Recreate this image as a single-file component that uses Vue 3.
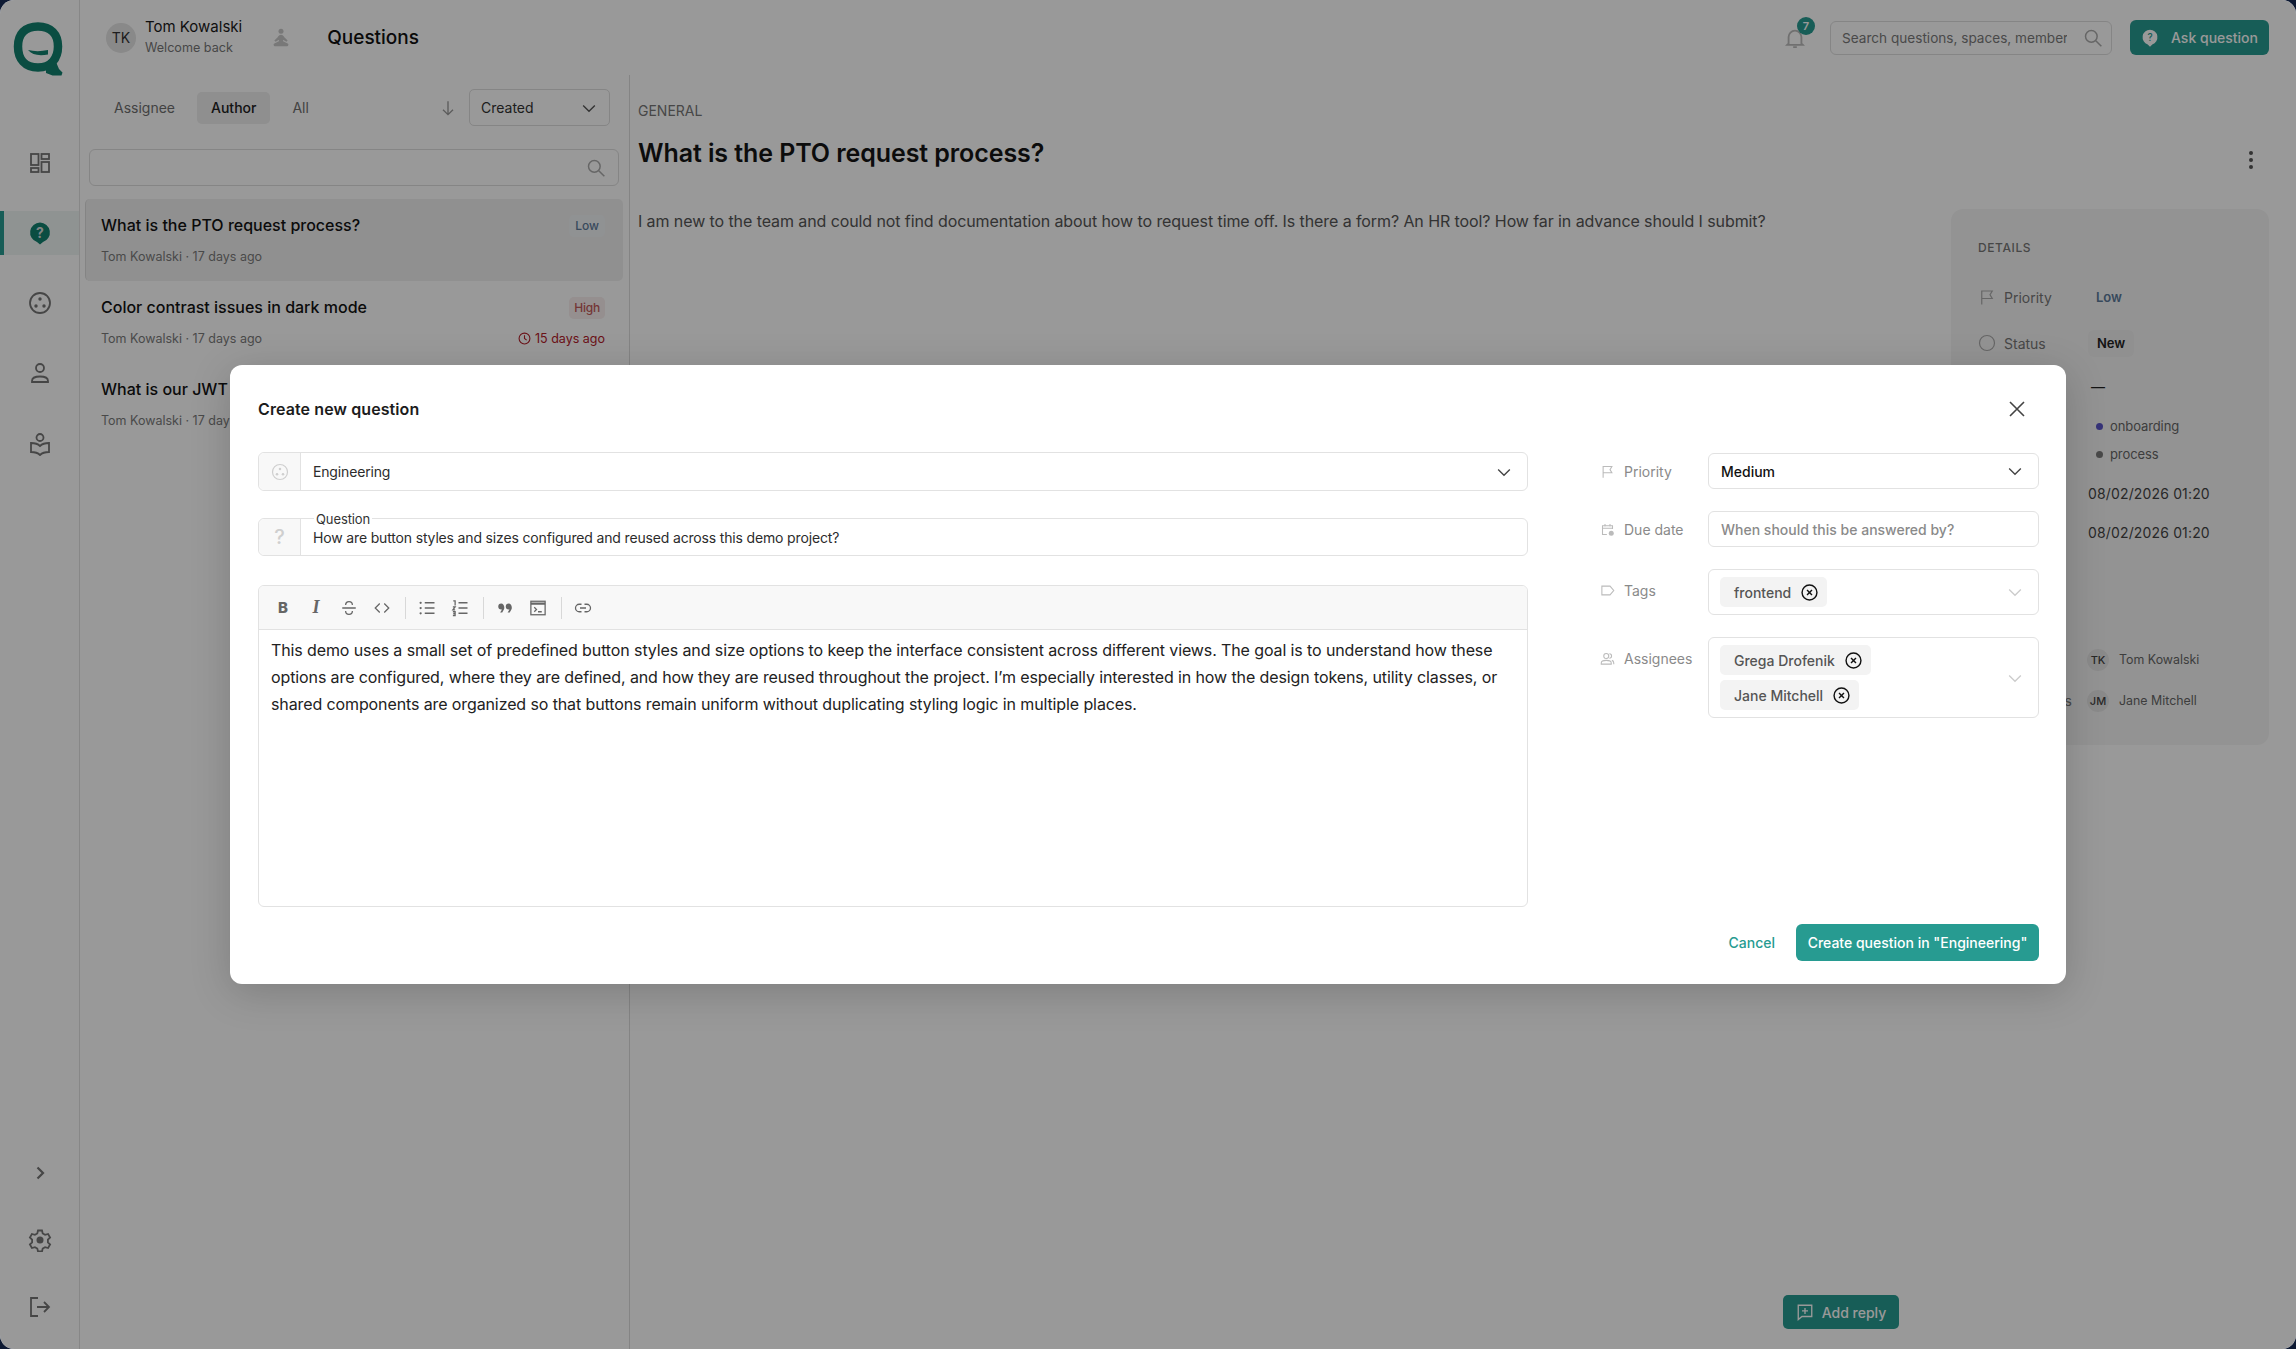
<template>
  <div class="app">
    <aside class="sidebar">
      <svg class="logo" viewBox="0 0 50 54">
        <path d="M25 4.500C12 4.500 5 12 5 24.500s7 21 20 21 20-9 20-21S38 4.500 25 4.500z" fill="none" stroke="#12806f" stroke-width="8.500" />
        <path d="M33 47l10-7 3 7 3.500 3.500-1 3-9 0-6.500-2.500z" class="logo-fill" />
        <path d="M15 28c6 1.500 13 1.500 20 0v4.500c-9 1.500-16 .5-20-4.500z" class="logo-fill" />
      </svg>
      <nav class="nav">
        <a class="nav-item">
          <svg viewBox="0 0 24 24" class="nav-icon"><rect x="3" y="3" width="7.500" height="11" /><rect x="13.500" y="3" width="7.500" height="5" /><rect x="13.500" y="11" width="7.500" height="10" /><rect x="3" y="17" width="7.500" height="4" /></svg>
        </a>
        <a class="nav-item active">
          <svg viewBox="0 0 24 24" class="nav-icon"><path d="M12 1.500a10 10 0 0 0-3 19.500l3 2.500 3-2.500A10 10 0 0 0 12 1.500z" fill="#12806f" stroke="none" /><text x="12" y="16.500" text-anchor="middle" class="q-mark">?</text></svg>
        </a>
        <a class="nav-item">
          <svg viewBox="0 0 24 24" class="nav-icon"><circle cx="12" cy="12" r="10" /><circle cx="12" cy="8" r="1.700" class="solid" /><circle cx="8" cy="15" r="1.700" class="solid" /><circle cx="16" cy="15" r="1.700" class="solid" /></svg>
        </a>
        <a class="nav-item">
          <svg viewBox="0 0 24 24" class="nav-icon"><circle cx="12" cy="7" r="4" /><path d="M4 21v-1c0-3 3-4.500 8-4.500s8 1.500 8 4.500v1z" /></svg>
        </a>
        <a class="nav-item">
          <svg viewBox="0 0 24 24" class="nav-icon"><circle cx="12" cy="5.500" r="3.500" /><path d="M12 14c-2-2-5-3-9-3v9c4 0 7 1 9 3 2-2 5-3 9-3v-9c-4 0-7 1-9 3z" /></svg>
        </a>
      </nav>
      <div class="side-bottom">
        <svg viewBox="0 0 24 24" class="nav-icon thick"><path d="M9.500 6.500l5.500 5.500-5.500 5.500" /></svg>
        <svg viewBox="0 0 24 24" class="nav-icon"><path d="M10 2.500h4l.7 3 2.400 1.400 3-.9 2 3.500-2.200 2.100v2.800l2.200 2.100-2 3.500-3-.9-2.400 1.400-.7 3h-4l-.7-3-2.400-1.400-3 .9-2-3.500 2.200-2.100v-2.800L1.900 9.500l2-3.500 3 .9 2.400-1.400z" /><circle cx="12" cy="12" r="3.500" class="solid" /></svg>
        <svg viewBox="0 0 24 24" class="nav-icon"><path d="M10 3H3v18h7M9 12h12M16 7l5 5-5 5" /></svg>
      </div>
    </aside>

    <div class="main">
      <header class="topbar">
        <div class="avatar">TK</div>
        <div class="user">
          <div class="user-name">Tom Kowalski</div>
          <div class="user-sub">Welcome back</div>
        </div>
        <svg class="zen" viewBox="0 0 24 24"><circle cx="12" cy="4" r="3" /><path d="M12 8c-2 0-3 1-4 3l-4 4 1.500 1.500 4-2.500v2l-6 3c-1 1 0 3 1 3h15c1 0 2-2 1-3l-6-3v-2l4 2.500 1.500-1.500-4-4c-1-2-2-3-4-3z" /></svg>
        <h1 class="page-title">Questions</h1>
        <div class="top-right">
          <div class="bell">
            <svg viewBox="0 0 24 24" class="bell-icon"><path d="M5 18V11a7 7 0 0 1 14 0v7l1.500 1.500h-17zM10 22h4" /></svg>
            <span class="bell-count">7</span>
          </div>
          <div class="top-search">
            <input class="top-input" placeholder="Search questions, spaces, members..." />
            <svg viewBox="0 0 24 24" class="search-icon wide"><circle cx="10" cy="10" r="7" /><path d="M15 15l7 7" /></svg>
          </div>
          <button class="ask-btn">
            <svg viewBox="0 0 24 24" class="ask-icon"><path d="M12 1a10 10 0 0 0-3 19.500l3 3 3-3A10 10 0 0 0 12 1z" fill="#fff" /><text x="12" y="16" text-anchor="middle" class="ask-mark">?</text></svg>
            Ask question
          </button>
        </div>
      </header>

      <div class="content">
        <section class="list-panel">
          <div class="filters">
            <span v-for="f in filters" :key="f" class="filter" :class="{ on: f === 'Author' }">{{ f }}</span>
            <svg viewBox="0 0 24 24" class="sort-arrow"><path d="M12 4v16M6 14l6 6 6-6" /></svg>
            <div class="sort-select">
              Created
              <svg viewBox="0 0 24 24" class="chev"><path d="M5 9l7 7 7-7" /></svg>
            </div>
          </div>
          <div class="list-search">
            <svg viewBox="0 0 24 24" class="search-icon"><circle cx="10" cy="10" r="7" /><path d="M15 15l7 7" /></svg>
          </div>
          <div class="q-list">
            <div v-for="q in questions" :key="q.title" class="q-item" :class="{ selected: q.selected }">
              <div class="q-line">
                <span class="q-title">{{ q.title }}</span>
                <span v-if="q.priority" class="badge" :class="q.priority.toLowerCase()">{{ q.priority }}</span>
              </div>
              <div class="q-line meta">
                <span>Tom Kowalski · 17 days ago</span>
                <span v-if="q.overdue" class="overdue">
                  <svg viewBox="0 0 24 24"><circle cx="12" cy="12" r="10" /><path d="M12 6v6l4 3" /></svg>
                  {{ q.overdue }}
                </span>
              </div>
            </div>
          </div>
        </section>

        <section class="detail">
          <div class="space-label">GENERAL</div>
          <div class="detail-head">
            <h2 class="detail-title">What is the PTO request process?</h2>
            <span class="dots"><i></i><i></i><i></i></span>
          </div>
          <div class="detail-body">
            <p class="detail-text">I am new to the team and could not find documentation about how to request time off. Is there a form? An HR tool? How far in advance should I submit?</p>
            <aside class="details">
              <div class="details-title">DETAILS</div>
              <div class="d-row first">
                <svg viewBox="0 0 24 24" class="d-icon"><path d="M5 22V4h14l-3 5 3 5H5" /></svg>
                <span class="d-label">Priority</span>
                <span class="d-val low">Low</span>
              </div>
              <div class="d-row">
                <svg viewBox="0 0 24 24" class="d-icon"><circle cx="12" cy="12" r="10" /></svg>
                <span class="d-label">Status</span>
                <span class="d-val chip">New</span>
              </div>
              <div class="d-row dash-row">
                <span class="d-val">—</span>
              </div>
              <div class="d-tag first-tag"><i class="tag-dot blue"></i>onboarding</div>
              <div class="d-tag"><i class="tag-dot"></i>process</div>
              <div class="d-date first-date">08/02/2026 01:20</div>
              <div class="d-date">08/02/2026 01:20</div>
              <div class="d-person first-person"><span class="mini">TK</span>Tom Kowalski</div>
              <div class="d-person"><span class="hidden-label">Assignees</span><span class="mini">JM</span>Jane Mitchell</div>
            </aside>
          </div>
          <button class="reply-btn">
            <svg viewBox="0 0 24 24"><path d="M3 3h18v15H8l-5 4zM8 10.500h8M12 6.500v8" /></svg>
            Add reply
          </button>
        </section>
      </div>
    </div>

    <div class="overlay"></div>
    <div class="modal-wrap">
      <div class="modal">
        <div class="modal-head">
          <h3 class="modal-title">Create new question</h3>
          <svg viewBox="0 0 24 24" class="close"><path d="M5 5l14 14M19 5L5 19" /></svg>
        </div>
        <div class="modal-body">
          <div class="left-col">
            <div class="field space-field">
              <span class="addon">
                <svg viewBox="0 0 24 24"><circle cx="12" cy="12" r="10" /><circle cx="12" cy="8" r="1.700" class="solid" /><circle cx="8" cy="15" r="1.700" class="solid" /><circle cx="16" cy="15" r="1.700" class="solid" /></svg>
              </span>
              <span class="field-text">Engineering</span>
              <svg viewBox="0 0 24 24" class="chev dark"><path d="M5 9l7 7 7-7" /></svg>
            </div>
            <div class="field question-field">
              <span class="addon q-addon">?</span>
              <span class="float-label">Question</span>
              <span class="field-text">How are button styles and sizes configured and reused across this demo project?</span>
            </div>
            <div class="editor">
              <div class="toolbar">
                <span class="tool bold">B</span>
                <span class="tool ital">I</span>
                <svg viewBox="0 0 24 24" class="tool-svg"><path d="M3 12h18M7.500 8c0-3 2-4.500 4.500-4.500S16.500 5 16.500 8M7.500 16c0 3 2 4.500 4.500 4.500s4.500-1.500 4.500-4.500" /></svg>
                <svg viewBox="0 0 24 24" class="tool-svg"><path d="M9 6l-6 6 6 6M15 6l6 6-6 6" /></svg>
                <i class="sep"></i>
                <svg viewBox="0 0 24 24" class="tool-svg"><path d="M9 5h13M9 12h13M9 19h13" /><circle cx="3.500" cy="5" r="1.500" class="solid" /><circle cx="3.500" cy="12" r="1.500" class="solid" /><circle cx="3.500" cy="19" r="1.500" class="solid" /></svg>
                <svg viewBox="0 0 24 24" class="tool-svg"><path d="M10 5h12M10 12h12M10 19h12M3 2.500h2.500v6M2.500 10.500h3l-3 4h3M2.500 17h3v5h-3M3 19.500h2.500" /></svg>
                <i class="sep"></i>
                <svg viewBox="0 0 24 24" class="tool-svg fill"><path d="M7 6a4 4 0 0 0 0 8c.4 0 .7 0 1-.1L5.500 18h2.800l2.200-4c.4-.8.600-1.500.600-2.500 0-3-1.800-5.500-4.100-5.500zM17 6a4 4 0 0 0 0 8c.4 0 .7 0 1-.1L15.500 18h2.800l2.200-4c.4-.8.600-1.500.600-2.500 0-3-1.800-5.500-4.100-5.500z" /></svg>
                <svg viewBox="0 0 24 24" class="tool-svg"><rect x="2.500" y="3" width="19" height="18" /><path d="M2.500 6h19" stroke-width="3" /><path d="M7 11l3 3-3 3M12 17h5" /></svg>
                <i class="sep"></i>
                <svg viewBox="0 0 24 24" class="tool-svg"><path d="M10 7H7a5 5 0 0 0 0 10h3M14 7h3a5 5 0 0 1 0 10h-3M8 12h8" /></svg>
              </div>
              <div class="editor-text">This demo uses a small set of predefined button styles and size options to keep the interface consistent across different views. The goal is to understand how these options are configured, where they are defined, and how they are reused throughout the project. I’m especially interested in how the design tokens, utility classes, or shared components are organized so that buttons remain uniform without duplicating styling logic in multiple places.</div>
            </div>
          </div>

          <div class="right-col">
            <div class="prop">
              <div class="prop-label">
                <svg viewBox="0 0 24 24"><path d="M5 22V4h14l-3 5 3 5H5" /></svg>
                Priority
              </div>
              <div class="prop-box h36 strong">
                Medium
                <svg viewBox="0 0 24 24" class="chev dark"><path d="M5 9l7 7 7-7" /></svg>
              </div>
            </div>
            <div class="prop">
              <div class="prop-label">
                <svg viewBox="0 0 24 24"><path d="M11 20H4V6h16v5M4 10h16M8 3v4M16 3v4" /><circle cx="18" cy="18" r="4" class="solid" /></svg>
                Due date
              </div>
              <div class="prop-box h36 placeholder">When should this be answered by?</div>
            </div>
            <div class="prop">
              <div class="prop-label tall">
                <svg viewBox="0 0 24 24"><path d="M3 5h13l6 7-6 7H3z" /></svg>
                Tags
              </div>
              <div class="prop-box chips">
                <div class="chip-wrap">
                  <span class="pill">frontend
                    <svg viewBox="0 0 24 24"><circle cx="12" cy="12" r="10.500" /><path d="M8.500 8.500l7 7M15.500 8.500l-7 7" /></svg>
                  </span>
                </div>
                <svg viewBox="0 0 24 24" class="chev faint"><path d="M5 9l7 7 7-7" /></svg>
              </div>
            </div>
            <div class="prop">
              <div class="prop-label tall">
                <svg viewBox="0 0 24 24"><circle cx="10" cy="8" r="4" /><path d="M2 21v-2c0-3 3-4 8-4s8 1 8 4v2zM15 4.500a3.500 3.500 0 0 1 0 7M19 15c2 .5 3 2 3 4v2" /></svg>
                Assignees
              </div>
              <div class="prop-box chips">
                <div class="chip-wrap">
                  <span class="pill">Grega Drofenik
                    <svg viewBox="0 0 24 24"><circle cx="12" cy="12" r="10.500" /><path d="M8.500 8.500l7 7M15.500 8.500l-7 7" /></svg>
                  </span>
                  <span class="pill">Jane Mitchell
                    <svg viewBox="0 0 24 24"><circle cx="12" cy="12" r="10.500" /><path d="M8.500 8.500l7 7M15.500 8.500l-7 7" /></svg>
                  </span>
                </div>
                <svg viewBox="0 0 24 24" class="chev faint"><path d="M5 9l7 7 7-7" /></svg>
              </div>
            </div>
          </div>
        </div>
        <div class="modal-foot">
          <button class="cancel">Cancel</button>
          <button class="create">Create question in "Engineering"</button>
        </div>
      </div>
    </div>
  </div>
</template>

<script setup>
const filters = ['Assignee', 'Author', 'All']

const questions = [
  { title: 'What is the PTO request process?', priority: 'Low', selected: true },
  { title: 'Color contrast issues in dark mode', priority: 'High', overdue: '15 days ago' },
  { title: 'What is our JWT token expiry policy?' }
]
</script>

<style>
html, body { margin: 0; background: #0e1a33; }
</style>

<style scoped>
.app {
  position: relative;
  display: flex;
  width: 2296px;
  height: 1349px;
  overflow: hidden;
  background: #fff;
  border-radius: 14px;
  font-family: Inter, "Liberation Sans", sans-serif;
  color: #111;
}
svg { fill: none; stroke: currentColor; stroke-width: 2; flex: none; }
.solid { fill: currentColor; stroke: none; }

.sidebar {
  width: 79px;
  flex: none;
  border-right: 1px solid #e2e2e2;
  display: flex;
  flex-direction: column;
  align-items: center;
  color: #6e6e6e;
}
.logo { width: 50px; height: 54px; margin: 22px 0 0 -4px; }
.logo-fill { fill: #12806f; stroke: none; }
.nav { width: 100%; margin-top: 52px; display: flex; flex-direction: column; }
.nav-item { height: 70.500px; display: flex; align-items: center; justify-content: center; border-left: 3px solid transparent; padding-right: 3px; color: #757575; }
.nav-item.active { height: 44px; margin: 12px 0 13px; background: #eef5f4; border-left: 4px solid #279b91; padding-right: 4px; }
.nav-icon { width: 24px; height: 24px; stroke-width: 1.800; }
.nav-icon.thick { stroke-width: 2.200; }
.q-mark { font-size: 14px; font-weight: 700; fill: #d8dede; stroke: none; font-family: Inter, sans-serif; }
.side-bottom { margin-top: auto; height: 158px; margin-bottom: 30px; display: flex; flex-direction: column; align-items: center; justify-content: space-between; color: #757575; }

.main { flex: 1; min-width: 0; display: flex; flex-direction: column; }
.topbar { height: 75px; flex: none; display: flex; align-items: center; padding: 0 27px 0 26px; }
.avatar { width: 30px; height: 30px; border-radius: 50%; background: #e4e4e4; color: #333; font-size: 14px; display: flex; align-items: center; justify-content: center; }
.user { margin-left: 9px; }
.user-name { font-size: 15px; line-height: 20px; color: #1a1a1a; }
.user-sub { font-size: 12.600px; line-height: 21px; color: #777; }
.zen { width: 20px; height: 20px; margin-left: 29px; fill: #c8c8c8; stroke: none; }
.page-title { margin: 0 0 0 36px; font-size: 19px; font-weight: 500; color: #111; }
.top-right { margin-left: auto; display: flex; align-items: center; }
.bell { position: relative; width: 22px; height: 24px; margin-right: 24px; color: #bbb; }
.bell-icon { width: 22px; height: 24px; }
.bell-count { position: absolute; top: -9px; left: 13px; width: 18px; height: 18px; border-radius: 50%; background: #279b91; color: #fff; font-size: 11px; font-weight: 600; display: flex; align-items: center; justify-content: center; }
.top-search { width: 282px; height: 34px; box-sizing: border-box; border: 1px solid #dedede; border-radius: 6px; display: flex; align-items: center; padding: 0 8px 0 11px; color: #aaa; }
.top-input { flex: 1; min-width: 0; border: 0; outline: 0; background: none; padding: 0; font: 13.600px Inter, sans-serif; }
.top-input::placeholder { color: #7b7b7b; opacity: 1; }
.search-icon { width: 20px; height: 20px; margin-left: 8px; stroke-width: 1.800; }
.search-icon.wide { margin-left: 16px; }
.ask-btn { margin-left: 18px; width: 139px; height: 35px; border: 0; border-radius: 6px; background: #279b91; color: #fff; font: 500 14px Inter, sans-serif; display: flex; align-items: center; justify-content: center; gap: 12px; padding: 0; }
.ask-icon { width: 18px; height: 18px; stroke: none; }
.ask-mark { font-size: 13px; font-weight: 500; fill: #279b91; font-family: Inter, sans-serif; }

.content { flex: 1; min-height: 0; display: flex; }
.list-panel { width: 549px; flex: none; border-right: 1px solid #dcdcdc; padding: 14px 0 0; }
.filters { display: flex; align-items: center; gap: 8px; height: 37px; padding: 0 19px 0 20px; }
.filter { height: 32px; padding: 0 14px; border-radius: 5px; font-size: 14px; line-height: 32px; color: #6f6f6f; }
.filter.on { background: #eee; color: #222; font-weight: 500; }
.sort-arrow { width: 20px; height: 20px; margin-left: auto; margin-right: 3px; color: #999; stroke-width: 1.600; }
.sort-select { width: 141px; height: 37px; box-sizing: border-box; border: 1px solid #dedede; border-radius: 5px; padding: 0 10px 0 11px; font-size: 14px; color: #333; display: flex; align-items: center; justify-content: space-between; }
.chev { width: 20px; height: 20px; color: #555; stroke-width: 1.600; }
.chev.dark { color: #444; }
.chev.faint { color: #ccc; }
.list-search { margin: 23px 10px 0 9px; height: 37px; box-sizing: border-box; border: 1px solid #dedede; border-radius: 6px; display: flex; align-items: center; justify-content: flex-end; padding-right: 12px; color: #aaa; }
.q-list { margin: 13px 6px 0 5px; }
.q-item { height: 82px; box-sizing: border-box; padding: 13.500px 18px 0 16px; }
.q-item.selected { background: #f1f1f1; border-radius: 5px; border-left: 1px solid #ddd; padding-left: 15px; }
.q-line { display: flex; align-items: center; justify-content: space-between; height: 24px; }
.q-line.meta { margin-top: 8px; font-size: 12.500px; color: #7b7b7b; }
.q-title { font-size: 16px; font-weight: 500; color: #131313; }
.badge { height: 22px; margin-top: 3px; padding: 0 6px; border-radius: 5px; font-size: 12px; line-height: 22px; font-weight: 500; }
.badge.low { background: #f0f3f6; color: #5d7a9a; }
.badge.high { padding: 0 5px; background: #f8eeee; color: #c25a5a; letter-spacing: -.2px; }
.overdue { color: #b3202a; display: flex; align-items: center; gap: 4px; }
.overdue svg { width: 13px; height: 13px; }

.detail { flex: 1; position: relative; min-width: 0; padding: 27px 27px 0 8px; }
.space-label { font-size: 14px; line-height: 17px; color: #777; }
.detail-head { display: flex; align-items: center; justify-content: space-between; margin-top: 17px; }
.detail-title { margin: 0; font-size: 25px; line-height: 34px; font-weight: 600; letter-spacing: -.08px; color: #151515; }
.dots { display: flex; flex-direction: column; gap: 3px; margin: 13px 16px 0 0; }
.dots i { width: 4px; height: 4px; border-radius: 50%; background: #555; }
.detail-body { display: flex; justify-content: space-between; margin-top: 39px; }
.detail-text { margin: 0; font-size: 16px; line-height: 24px; letter-spacing: -.09px; color: #555; white-space: nowrap; width: 0; }
.details { width: 318px; height: 536px; box-sizing: border-box; background: #f6f6f6; border-radius: 12px; padding: 31px 0 0 27px; font-size: 14px; color: #777; }
.details-title { font-size: 12px; line-height: 16px; font-weight: 500; letter-spacing: .6px; color: #777; }
.d-row { display: flex; align-items: center; height: 30px; margin-top: 16px; }
.d-row.first { margin-top: 26px; }
.d-row.dash-row { margin-top: 13px; padding-left: 110px; }
.d-icon { width: 18px; height: 18px; margin-right: 8px; color: #aaa; stroke-width: 1.600; }
.d-label { width: 84px; }
.d-val { color: #222; font-size: 14px; font-weight: 600; padding: 0 9px; height: 27px; line-height: 27px; border-radius: 6px; }
.dash-row .d-val { padding: 0 3px; font-weight: 400; }
.d-val.low { color: #5d7a9a; font-size: 13px; margin-left: -1px; }
.d-val.chip { background: #f0f0f0; font-size: 13px; }
.d-tag { margin-left: 118px; height: 28px; display: flex; align-items: center; font-size: 13px; letter-spacing: -.1px; color: #666; }
.first-tag { margin-top: 11px; }
.tag-dot { width: 7px; height: 7px; border-radius: 50%; background: #7a7a7a; margin-right: 7px; }
.tag-dot.blue { background: #5a55c8; }
.d-date { margin-left: 110px; height: 39px; line-height: 39px; font-size: 14px; letter-spacing: .15px; color: #444; }
.first-date { margin-top: 6px; }
.d-person { position: relative; margin-left: 113px; height: 41px; display: flex; align-items: center; gap: 10px; font-size: 12.400px; color: #666; }
.first-person { margin-top: 87px; }
.hidden-label { position: absolute; right: calc(100% + 19px); top: 12px; font-size: 14px; color: #777; }
.mini { width: 22px; height: 22px; border-radius: 50%; background: #e6e6e6; color: #444; font-size: 11px; font-weight: 500; display: flex; align-items: center; justify-content: center; margin-left: -4px; }
.reply-btn { position: absolute; left: 1153px; bottom: 20px; width: 116px; height: 34px; border: 0; border-radius: 5px; background: #279b91; color: #fff; font: 500 14px Inter, sans-serif; display: flex; align-items: center; justify-content: center; gap: 8px; padding: 0; }
.reply-btn svg { width: 18px; height: 18px; stroke-width: 1.800; }

.overlay { position: absolute; inset: 0; background: rgba(0, 0, 0, .4); border-radius: 14px; }
.modal-wrap { position: absolute; inset: 0; display: flex; align-items: center; justify-content: center; }
.modal { width: 1836px; height: 619px; box-sizing: border-box; background: #fff; border-radius: 12px; padding: 32px 27px 23px 28px; box-shadow: 0 8px 40px rgba(0, 0, 0, .18); display: flex; flex-direction: column; }
.modal-head { display: flex; align-items: center; justify-content: space-between; height: 24px; }
.modal-title { margin: 0; font-size: 16px; line-height: 24px; font-weight: 600; letter-spacing: .1px; color: #1c1c1c; }
.close { width: 24px; height: 24px; color: #444; margin-right: 10px; stroke-width: 1.600; }
.modal-body { flex: 1; min-height: 0; display: flex; margin-top: 31px; }
.left-col { width: 1270px; flex: none; }
.field { position: relative; display: flex; align-items: center; box-sizing: border-box; border: 1px solid #e2e2e2; border-radius: 6px; }
.space-field { height: 39px; }
.question-field { height: 38px; margin-top: 27px; }
.addon { align-self: stretch; width: 41px; flex: none; background: #f8f8f8; border-right: 1px solid #e2e2e2; border-radius: 6px 0 0 6px; display: flex; align-items: center; justify-content: center; color: #cfcfcf; }
.addon svg { width: 18px; height: 18px; stroke-width: 1.600; }
.q-addon { font-size: 20px; font-weight: 500; }
.field-text { flex: 1; padding-left: 12px; font-size: 14px; letter-spacing: -.16px; color: #2c2c2c; }
.float-label { position: absolute; left: 55px; top: -8px; padding: 0 2px; background: #fff; font-size: 13px; line-height: 16px; letter-spacing: -.1px; color: #333; }
.space-field .chev { margin-right: 13px; }
.editor { height: 322px; margin-top: 29px; box-sizing: border-box; border: 1px solid #e2e2e2; border-radius: 6px; overflow: hidden; }
.toolbar { height: 44px; box-sizing: border-box; background: #f8f8f8; border-bottom: 1px solid #e2e2e2; display: flex; align-items: center; padding-left: 15px; color: #666; }
.tool { width: 18px; margin-right: 15px; text-align: center; font-size: 15px; color: #666; }
.tool.bold { font-weight: 800; }
.tool.ital { font-family: "Liberation Serif", serif; font-style: italic; font-size: 18px; font-weight: 700; }
.tool-svg { width: 18px; height: 18px; margin-right: 15px; stroke-width: 1.700; }
.tool-svg.fill { fill: currentColor; stroke: none; }
.sep { width: 1px; height: 22px; background: #d8d8d8; margin: 0 12px 0 -1px; }
.editor-text { padding: 7px 12px; font-size: 16px; line-height: 27px; letter-spacing: -.11px; color: #222; }
.right-col { margin-left: 72px; padding-top: 1px; flex: 1; display: flex; flex-direction: column; gap: 22px; }
.prop { display: flex; align-items: flex-start; }
.prop-label { width: 108px; flex: none; height: 36px; display: flex; align-items: center; font-size: 14px; color: #8a8a8a; gap: 9px; }
.prop-label.tall { height: 42px; }
.prop-label svg { width: 15px; height: 15px; color: #bbb; stroke-width: 1.700; }
.prop-box { flex: 1; box-sizing: border-box; border: 1px solid #e2e2e2; border-radius: 6px; display: flex; align-items: center; justify-content: space-between; padding: 0 13px 0 12px; font-size: 14px; }
.h36 { height: 36px; }
.strong { font-weight: 500; color: #111; }
.placeholder { color: #8a8a8a; font-weight: 500; }
.chips { padding: 7px 13px 7px 11px; }
.chip-wrap { display: flex; flex-direction: column; align-items: flex-start; gap: 5px; }
.pill { height: 30px; padding: 0 9px 0 14px; background: #f3f3f3; border-radius: 5px; display: flex; align-items: center; gap: 10px; font-size: 14px; font-weight: 500; color: #555; }
.pill svg { width: 17px; height: 17px; color: #111; stroke-width: 2; }
.modal-foot { display: flex; justify-content: flex-end; align-items: center; height: 37px; gap: 21px; }
.cancel { border: 0; background: none; padding: 0; font: 500 14px Inter, sans-serif; color: #279b91; }
.create { height: 37px; width: 243px; border: 0; border-radius: 6px; background: #279b91; color: #fff; font: 500 14px Inter, sans-serif; padding: 0; }
</style>
